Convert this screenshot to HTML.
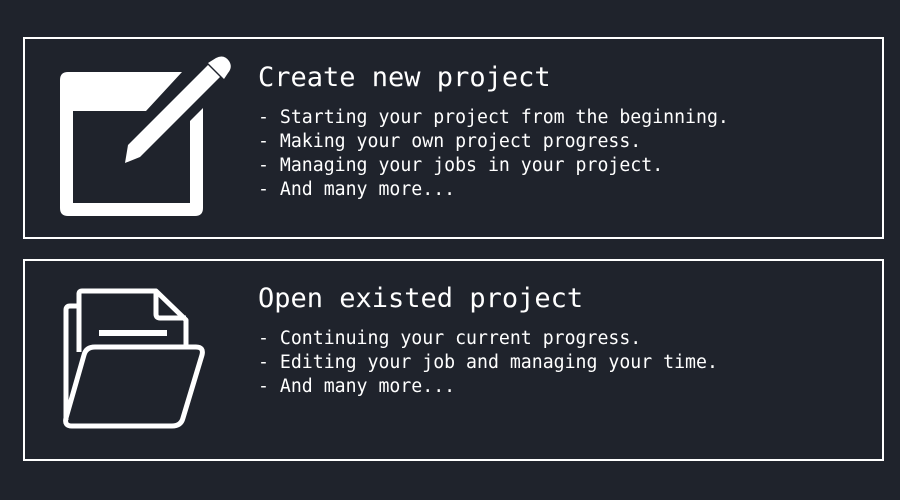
<!DOCTYPE html>
<html><head><style>
body{margin:0;width:900px;height:500px;background:#1f232c;overflow:hidden;font-family:"DejaVu Sans Mono","Liberation Mono",monospace;color:#fff}
.box{position:absolute;left:23px;width:857px;height:198px;border:2px solid #fff}
.t{position:absolute;left:233px;font-size:27px;white-space:pre}
.l{position:absolute;left:233px;font-size:18.2px;line-height:24px;white-space:pre}
svg{position:absolute;left:0;top:0}
</style></head><body>
<div class="box" style="top:37px"></div>
<div class="box" style="top:259px"></div>
<div style="position:absolute;left:25px;top:39px">
<div class="t" style="top:23px">Create new project</div>
<div class="l" style="top:67px">- Starting your project from the beginning.
- Making your own project progress.
- Managing your jobs in your project.
- And many more...</div></div>
<div style="position:absolute;left:25px;top:261px">
<div class="t" style="top:22px">Open existed project</div>
<div class="l" style="top:66px">- Continuing your current progress.
- Editing your job and managing your time.
- And many more...</div></div>
<svg width="900" height="500">
<path fill="#fff" fill-rule="evenodd" d="M68 72H182L146 111H73V203H190V121L203 108V208Q203 216 195 216H68Q60 216 60 208V80Q60 72 68 72Z"/>
<path fill="#fff" d="M128 145L208 65L220 77L140 157L125 163Z"/>
<path fill="#fff" d="M208 63L216 58Q224 54 229 61Q233 67 228 73L224 79Z"/>
<g fill="none" stroke="#fff" stroke-width="5" stroke-linejoin="round">
<path d="M79 352V294Q79 291 82 291H156L186 320V346"/>
<path d="M156 291V314Q156 318 160 318H186"/>
<path d="M79 306H70Q66 306 66 310V420"/>
<path d="M95 347H196Q204 347 202 355L183 418Q181 426 172 426H72Q64 426 66 418L84 355Q86 347 95 347Z"/>
</g>
<rect x="99" y="330" width="68" height="6" fill="#fff"/>
</svg>
</body></html>
